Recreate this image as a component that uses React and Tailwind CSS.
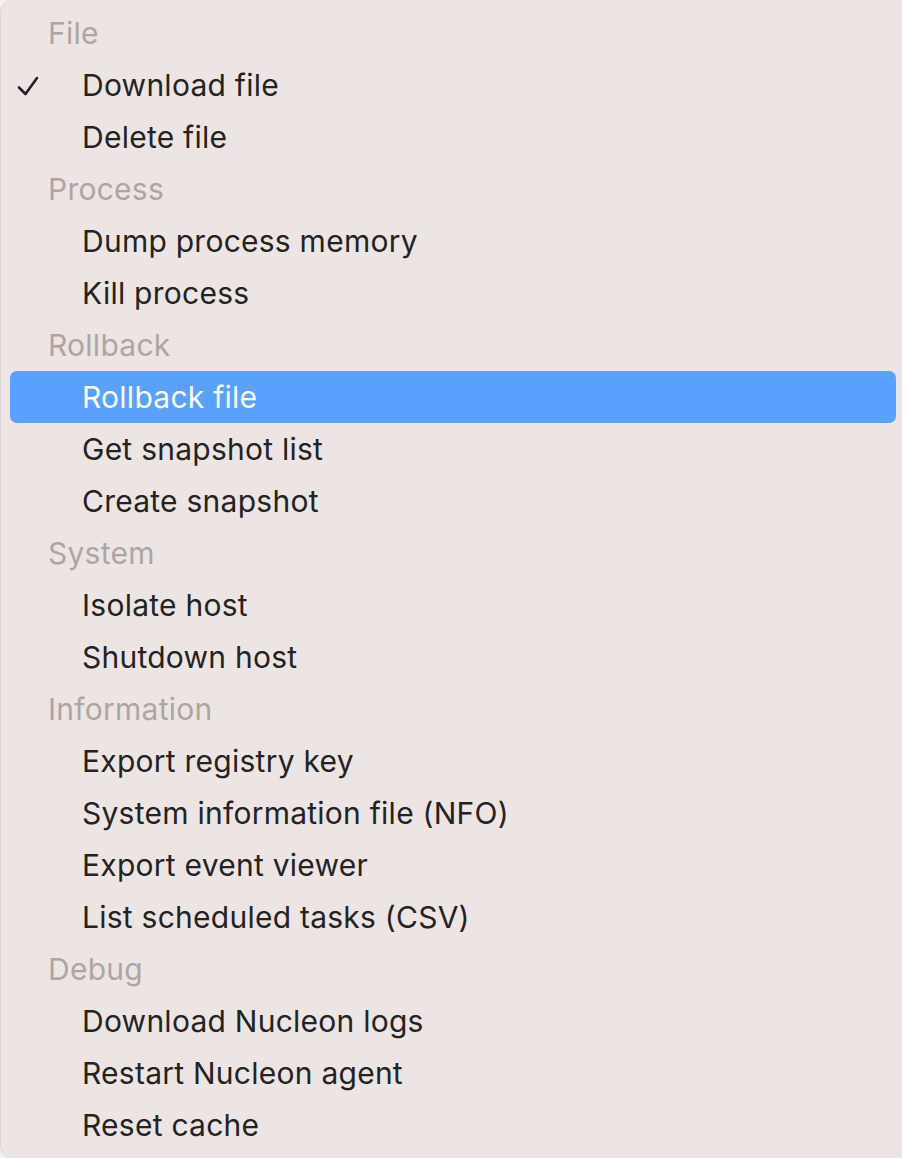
import React from "react";

const sections = [
  { title: "File", items: ["Download file", "Delete file"] },
  { title: "Process", items: ["Dump process memory", "Kill process"] },
  {
    title: "Rollback",
    items: ["Rollback file", "Get snapshot list", "Create snapshot"],
  },
  { title: "System", items: ["Isolate host", "Shutdown host"] },
  {
    title: "Information",
    items: [
      "Export registry key",
      "System information file (NFO)",
      "Export event viewer",
      "List scheduled tasks (CSV)",
    ],
  },
  {
    title: "Debug",
    items: ["Download Nucleon logs", "Restart Nucleon agent", "Reset cache"],
  },
];

const checked = "Download file";
const active = "Rollback file";

const Check = () => (
  <svg width="24" height="22" viewBox="0 0 24 22" className="absolute left-[6px] top-[16px]">
    <path
      d="M3 12.5 L9.5 19 L21 3"
      fill="none"
      stroke="#222"
      strokeWidth="2.6"
      strokeLinecap="round"
      strokeLinejoin="round"
    />
  </svg>
);

export default function App() {
  return (
    <div className="w-[902px] h-[1158px] bg-[#f4f0ef]">
      <div
        className="h-full w-full bg-[#ede5e3] rounded-l-[12px] border-l border-[#ddd6d4] py-[7px] pl-[9px] pr-[6px] text-[30px] tracking-[0.25px]"
        style={{ fontFamily: "Inter, 'Noto Sans', sans-serif" }}
      >
        {sections.map((s) => (
          <div key={s.title}>
            <div className="h-[52px] flex items-center pl-[38px] text-[#ada5a4]">
              {s.title}
            </div>
            {s.items.map((item) => (
              <div
                key={item}
                className={`relative h-[52px] flex items-center pl-[72px] rounded-[7px] ${
                  item === active ? "bg-[#5aa0ff] text-white" : "text-[#232323]"
                }`}
              >
                {item === checked && <Check />}
                {item}
              </div>
            ))}
          </div>
        ))}
      </div>
    </div>
  );
}
